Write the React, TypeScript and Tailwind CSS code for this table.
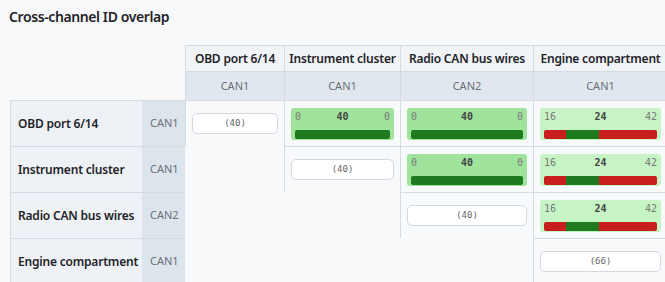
import React from "react";

type Cell =
  | { kind: "pill"; v: number }
  | { kind: "bar"; a: number; b: number; c: number }
  | null;

const cols = [
  { name: "OBD port 6/14", can: "CAN1" },
  { name: "Instrument cluster", can: "CAN1" },
  { name: "Radio CAN bus wires", can: "CAN2" },
  { name: "Engine compartment", can: "CAN1" },
];

const matrix: Cell[][] = [
  [
    { kind: "pill", v: 40 },
    { kind: "bar", a: 0, b: 40, c: 0 },
    { kind: "bar", a: 0, b: 40, c: 0 },
    { kind: "bar", a: 16, b: 24, c: 42 },
  ],
  [
    null,
    { kind: "pill", v: 40 },
    { kind: "bar", a: 0, b: 40, c: 0 },
    { kind: "bar", a: 16, b: 24, c: 42 },
  ],
  [null, null, { kind: "pill", v: 40 }, { kind: "bar", a: 16, b: 24, c: 42 }],
  [null, null, null, { kind: "pill", v: 66 }],
];

const mono = { fontFamily: '"DejaVu Sans Mono", "Liberation Mono", monospace' };

function Bar({ a, b, c }: { a: number; b: number; c: number }) {
  const total = a + b + c;
  const mixed = a + c > 0;
  return (
    <div
      className={
        mixed
          ? "w-full h-[32px] rounded-[3px] px-[4px] pt-[1px] bg-[#c7f4c4]"
          : "w-full h-[32px] rounded-[3px] px-[4px] pt-[1px] bg-[#9fe39c]"
      }
    >
      <div
        className="grid grid-cols-3 items-center h-[16px] text-[10px] leading-[16px] text-[#7a7a7a]"
        style={mono}
      >
        <span className="text-left">{a}</span>
        <span className="text-center font-bold text-[#444]">{b}</span>
        <span className="text-right">{c}</span>
      </div>
      <div className="mt-[5px] flex h-[9px] rounded-[2px] overflow-hidden">
        {a > 0 && <div className="bg-[#c81e1e]" style={{ width: `${(a / total) * 100}%` }} />}
        <div className="bg-[#1f7a1f]" style={{ width: `${(b / total) * 100}%` }} />
        {c > 0 && <div className="bg-[#c81e1e]" style={{ width: `${(c / total) * 100}%` }} />}
      </div>
    </div>
  );
}

function Pill({ v }: { v: number }) {
  return (
    <div
      className="w-full h-[21px] rounded-[5px] border border-[#d3d9e1] bg-white flex items-center justify-center text-[9px] text-[#666]"
      style={mono}
    >
      ({v})
    </div>
  );
}

export default function App() {
  return (
    <div
      className="w-[665px] h-[282px] overflow-hidden bg-[#f8f9fb] text-[#1f2328]"
      style={{ fontFamily: '"Noto Sans", "Open Sans", sans-serif' }}
    >
      <div className="pl-[9px] pt-[7px] h-[45px] text-[14px] leading-[20px] font-semibold tracking-[-0.4px]">
        Cross-channel ID overlap
      </div>
      <div className="ml-[10px] grid grid-cols-[132px_43px_99px_116px_133px_134px] grid-rows-[26px_29px_46px_46px_46px_46px]">
        {/* header row */}
        <div />
        <div />
        {cols.map((c) => (
          <div
            key={c.name}
            className="border-t border-l border-[#d3dbe4] bg-[#f1f4f7] flex items-center justify-center text-[12px] font-semibold whitespace-nowrap tracking-[-0.2px]"
          >
            {c.name}
          </div>
        ))}
        {/* CAN row */}
        <div />
        <div />
        {cols.map((c) => (
          <div
            key={c.name + "can"}
            className="border-t border-l border-[#d3dbe4] bg-[#e0e7ee] flex items-center justify-center text-[11px] text-[#6b7078]"
          >
            {c.can}
          </div>
        ))}
        {/* data rows */}
        {cols.map((r, i) => (
          <React.Fragment key={r.name + "row"}>
            <div className="border-t border-l border-[#d3dbe4] bg-[#eef2f6] flex items-center pl-[7px] text-[12px] font-semibold whitespace-nowrap tracking-[-0.2px]">
              {r.name}
            </div>
            <div className="border-t border-[#d3dbe4] bg-[#dce4ec] flex items-center pl-[8px] text-[11px] text-[#6b7078]">
              {r.can}
            </div>
            {matrix[i].map((cell, j) =>
              cell ? (
                <div
                  key={j}
                  className="border-t border-l border-[#d3dbe4] flex items-center px-[6px]"
                >
                  {cell.kind === "pill" ? <Pill v={cell.v} /> : <Bar a={cell.a} b={cell.b} c={cell.c} />}
                </div>
              ) : (
                <div key={j} />
              )
            )}
          </React.Fragment>
        ))}
      </div>
    </div>
  );
}
